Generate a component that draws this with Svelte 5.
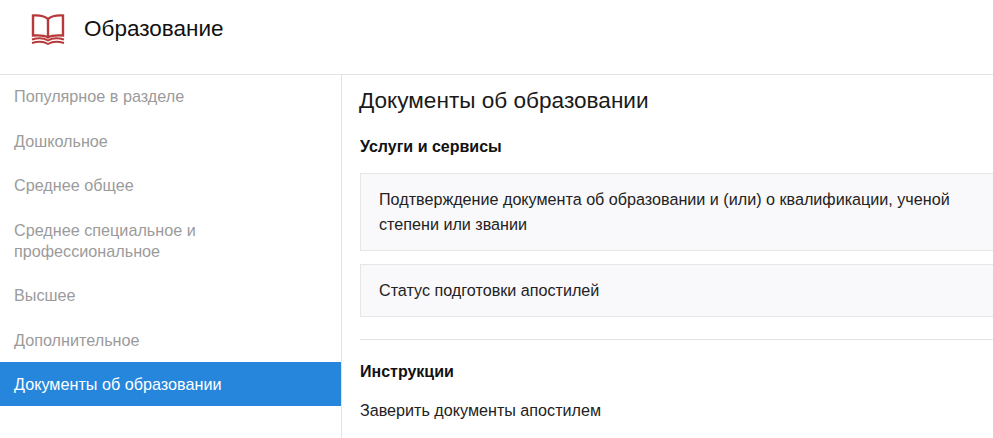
<script lang="ts">
  const navItems = [
    { label: "Популярное в разделе" },
    { label: "Дошкольное" },
    { label: "Среднее общее" },
    { label: "Среднее специальное и профессиональное" },
    { label: "Высшее" },
    { label: "Дополнительное" },
    { label: "Документы об образовании", active: true },
  ];

  const services = [
    "Подтверждение документа об образовании и (или) о квалификации, ученой степени или звании",
    "Статус подготовки апостилей",
  ];
</script>

<div class="page">
  <header class="top">
    <svg class="logo" width="34" height="31" viewBox="0 0 34 31" fill="none" stroke="#b8393a" stroke-width="2.400">
      <path d="M17 5 C14 2.500 9 1 2 1.500 L2 21.500 C9 21 14 21.500 17 23.500 C20 21.500 25 21 32 21.500 L32 1.500 C25 1 20 2.500 17 5 Z M17 5 L17 23.500" />
      <path d="M1 25.500 C8 23.500 13 24 17 26.500 C21 24 26 23.500 33 25.500" stroke-width="2" />
      <path d="M1 29 C8 27 13 27.500 17 30 C21 27.500 26 27 33 29" stroke-width="2" />
    </svg>
    <h1>Образование</h1>
  </header>

  <div class="body">
    <nav class="side">
      {#each navItems as item}
        <div class="nav-item" class:active={item.active}>{item.label}</div>
      {/each}
    </nav>

    <main class="content">
      <h2>Документы об образовании</h2>
      <h3>Услуги и сервисы</h3>
      <div class="cards">
        {#each services as text}
          <div class="card">{text}</div>
        {/each}
      </div>
      <hr />
      <h3>Инструкции</h3>
      <div class="link">Заверить документы апостилем</div>
    </main>
  </div>
</div>

<style>
  :global(body) {
    margin: 0;
    background: #fff;
  }

  .page {
    width: 993px;
    height: 438px;
    overflow: hidden;
    font-family: "Liberation Sans", Arial, sans-serif;
    color: #1a1a1a;
  }

  .top {
    display: flex;
    align-items: center;
    height: 75px;
    box-sizing: border-box;
    border-bottom: 1px solid #e3e3e3;
    padding: 0 0 16px 31px;
  }

  .logo {
    flex: none;
  }

  h1 {
    margin: 0 0 0 19px;
    font-size: 22.500px;
    font-weight: 400;
    color: #111;
  }

  .body {
    display: flex;
    height: 363px;
  }

  .side {
    width: 342px;
    flex: none;
    box-sizing: border-box;
    border-right: 1px solid #e3e3e3;
  }

  .nav-item {
    padding: 12px 14px 11.500px;
    font-size: 16.200px;
    line-height: 21px;
    color: #9b9b9b;
  }

  .nav-item:first-child {
    padding-top: 11px;
  }

  .nav-item.active {
    background: #2586dc;
    color: #fff;
    padding-bottom: 11px;
  }

  .content {
    flex: 1;
    min-width: 0;
    padding: 12px 0 0 18px;
  }

  h2 {
    margin: 0 0 0 -1px;
    font-size: 22.600px;
    line-height: 28px;
    font-weight: 400;
    color: #1a1a1a;
  }

  h3 {
    margin: 0;
    font-size: 16px;
    line-height: 20px;
    font-weight: 700;
    color: #111;
  }

  .content h2 + h3 {
    margin-top: 22px;
  }

  .cards {
    display: flex;
    flex-direction: column;
    gap: 13px;
    margin-top: 16px;
  }

  .card {
    box-sizing: border-box;
    padding: 12.500px 40px 13.500px 18px;
    background: #f9f8fa;
    border: 1px solid #e6e6e6;
    border-right: 0;
    font-size: 16.150px;
    line-height: 25px;
    color: #222;
  }

  hr {
    margin: 22px 0 22px;
    border: 0;
    border-top: 1px solid #e3e3e3;
  }

  .link {
    margin-top: 18px;
    font-size: 16.150px;
    line-height: 20px;
    color: #222;
  }
</style>
